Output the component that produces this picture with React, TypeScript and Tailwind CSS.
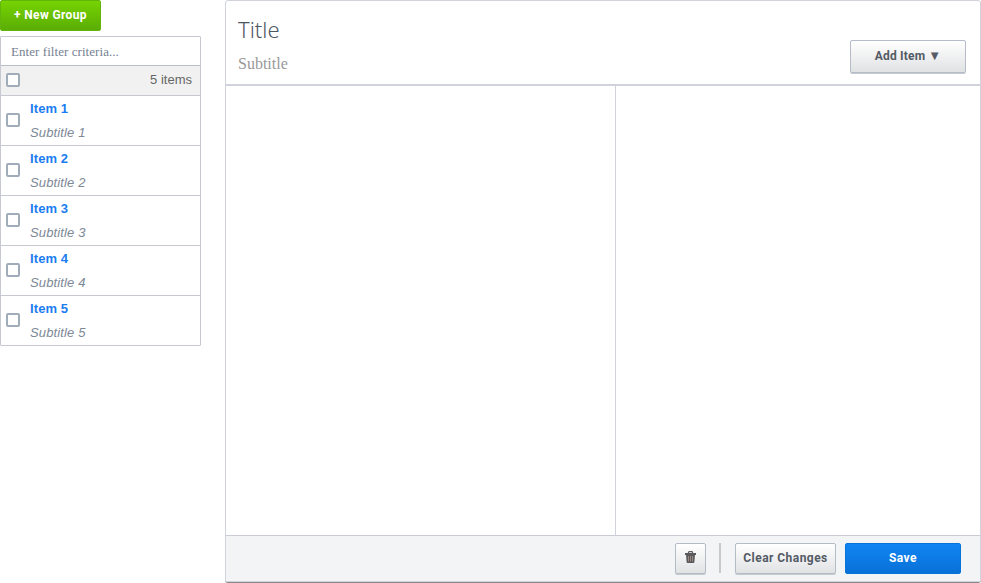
import React from "react";

const items = [1, 2, 3, 4, 5];

function Checkbox() {
  return (
    <span
      role="checkbox"
      aria-checked="false"
      className="mb-[2px] block h-[14px] w-[14px] shrink-0 rounded-[2px] border-2 border-[#a0adb9] bg-white"
    />
  );
}

const greyButton =
  "flex items-center justify-center rounded-[2px] border border-[#b4bcc8] bg-linear-to-b from-white to-[#e1e2e4] font-['Roboto',sans-serif] text-[12px] font-bold text-[#545b66] shadow-[0_1px_0_#c6cad0]";

function Sidebar() {
  return (
    <aside className="w-[201px] shrink-0">
      <button className="flex h-[31px] w-[101px] items-center justify-center rounded-[2px] border border-[#63b50b] bg-linear-to-b from-[#76d300] to-[#5bad05] pb-px font-['Roboto',sans-serif] text-[12px] font-bold tracking-[0.37px] text-white">
        + New Group
      </button>
      <div className="mt-[5px] rounded-[1px] border border-[#c6c9d2]">
        <div className="flex h-[29px] items-center border-b border-[#b8bfcb] pt-[2px] pl-[10px] font-['Liberation_Serif',serif] text-[13px] tracking-[0.06px] text-[#768291]">
          Enter filter criteria...
        </div>
        <div className="flex h-[30px] items-center justify-between border-b border-[#c6c9d2] bg-[#f1f1f1] pr-2 pl-[5px] text-[13px] text-[#666]">
          <Checkbox />
          <span className="pb-[2px]">5 items</span>
        </div>
        {items.map((n) => (
          <div
            key={n}
            className="flex h-[50px] items-center border-b border-[#c6c9d2] pl-[5px] last:h-[49px] last:border-b-0"
          >
            <Checkbox />
            <div className="ml-[10px] text-[13px] leading-6">
              <div className="font-bold tracking-[0.1px] text-[#1b7df0]">Item {n}</div>
              <div className="tracking-[0.14px] text-[#7d8896] italic">Subtitle {n}</div>
            </div>
          </div>
        ))}
      </div>
    </aside>
  );
}

function TrashIcon() {
  return (
    <svg width="11" height="12" viewBox="0 0 11 12">
      <path d="M3.5 2V1.4Q3.5.7 4.2.7h2.6q.7 0 .7.7V2" fill="none" stroke="#5a5a5c" strokeWidth="1.2" />
      <path d="M0 2h11v2H0z" fill="#5a5a5c" />
      <path d="M1 3h9l-.6 8q-.1 1-1 1H2.6q-.9 0-1-1z" fill="#5a5a5c" />
      <path d="M3.5 5v5.5M5.5 5v5.5M7.5 5v5.5" stroke="#a58d83" strokeWidth="0.9" />
    </svg>
  );
}

export default function App() {
  return (
    <div className="flex h-[583px] w-[981px] overflow-hidden bg-white font-['Liberation_Sans',Arial,sans-serif]">
      <Sidebar />
      <main className="ml-6 flex h-[582px] w-[756px] flex-col rounded-[3px] border border-[#d0d3dc] shadow-[0_1px_0_#888]">
        <header className="flex h-[85px] shrink-0 justify-between border-b-2 border-[#d0d3dc] pr-[14px] pl-3">
          <div>
            <h1 className="mt-[13px] font-['Noto_Sans','Open_Sans',sans-serif] text-[22px] leading-[30px] font-light text-[#4d5764]">
              Title
            </h1>
            <h2 className="mt-[10px] font-['Liberation_Serif',serif] text-[16px] leading-5 text-[#999]">
              Subtitle
            </h2>
          </div>
          <button className={`${greyButton} mt-[39px] h-[33px] w-[116px] pb-px`}>
            <span className="tracking-[0.2px]">Add Item</span>
            <span className="ml-[3px] text-[13px]">▼</span>
          </button>
        </header>
        <div className="flex min-h-0 flex-1">
          <section className="w-[390px] border-r border-[#d0d3dc]" />
          <section className="flex-1" />
        </div>
        <footer className="flex h-[46px] shrink-0 items-start justify-end border-t border-[#c9ccd5] bg-[#f2f4f6] pt-[7px] pr-[19px]">
          <button aria-label="Delete" className={`${greyButton} h-[31px] w-[31px] pb-[3px]`}>
            <span className="mr-px">
              <TrashIcon />
            </span>
          </button>
          <span className="ml-[13px] h-[30px] w-[2px] bg-[#c7c9cd]" />
          <button className={`${greyButton} ml-[14px] h-[31px] w-[101px] pb-px tracking-[0.45px]`}>
            Clear Changes
          </button>
          <button className="ml-[9px] flex h-[31px] w-[116px] items-center justify-center rounded-[2px] border border-[#0873d8] bg-linear-to-b from-[#1085f2] to-[#0971d8] pb-px font-['Roboto',sans-serif] text-[12px] font-bold tracking-[0.5px] text-white">
            Save
          </button>
        </footer>
      </main>
    </div>
  );
}
